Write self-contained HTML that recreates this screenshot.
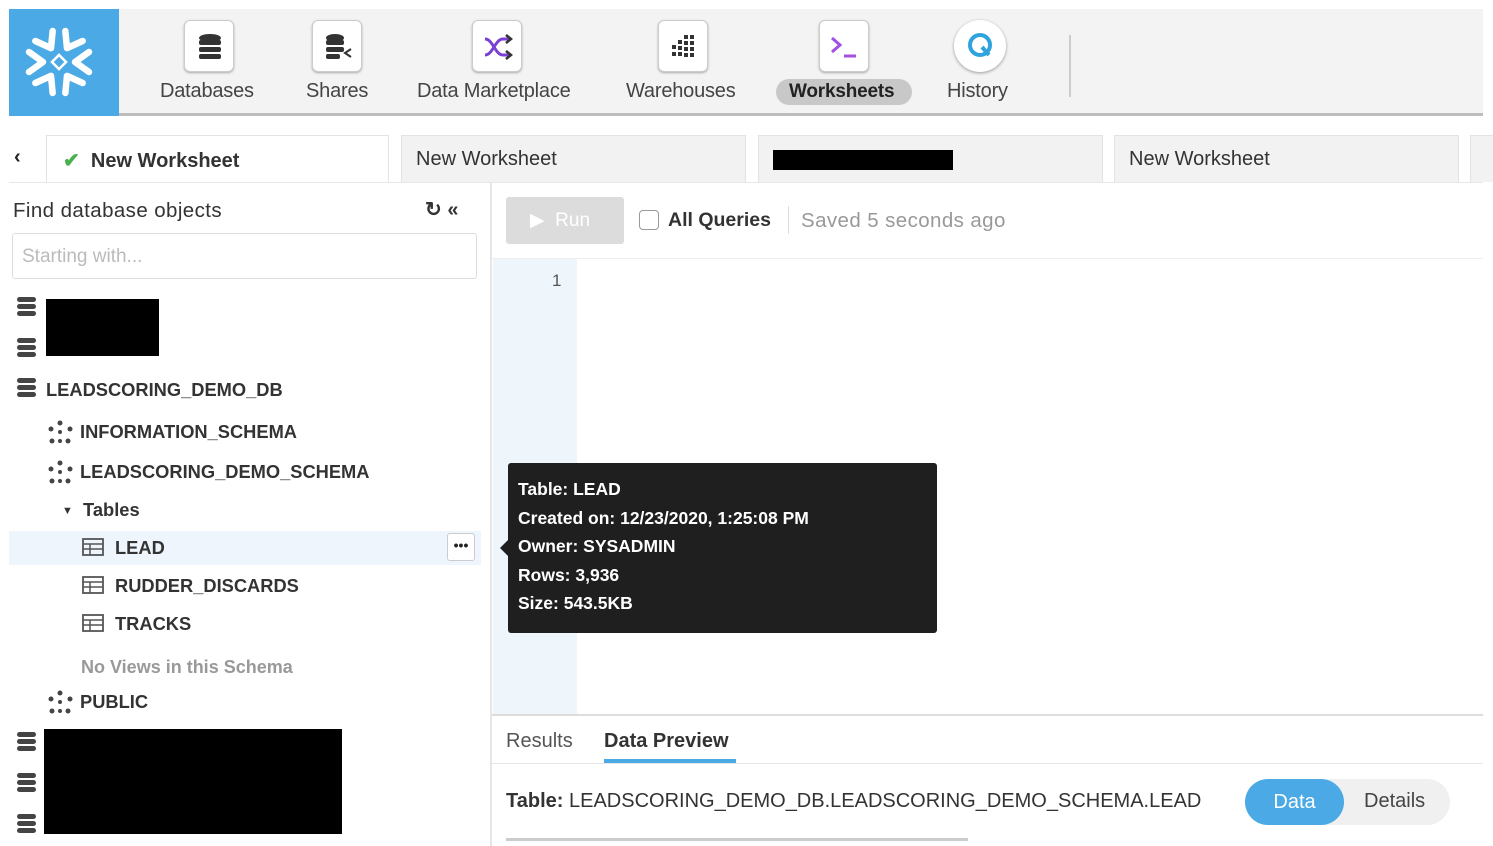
<!DOCTYPE html>
<html><head><meta charset="utf-8"><style>
*{margin:0;padding:0;box-sizing:border-box}
body{width:1493px;height:846px;background:#fff;position:relative;overflow:hidden;font-family:"Liberation Sans",sans-serif;color:#222}
.a{position:absolute;white-space:nowrap}
.nav{top:9px;left:9px;width:1474px;height:107px;background:#f3f3f3;border-bottom:3px solid #bdbdbd}
.logo{top:9px;left:9px;width:110px;height:107px;background:#4ba9e5}
.ib{width:50px;height:52px;background:#fff;border:1px solid #ccc;border-radius:6px;box-shadow:0 1px 2px #aaa}
.nl{font-size:20px;color:#444;top:80px;letter-spacing:-0.2px}
.tab{top:135px;height:47px;background:#f2f2f2;border:1px solid #e3e3e3;border-bottom:none;font-size:20px;color:#333;padding:12px 14px}
.tree{font-size:18.3px;font-weight:bold;color:#333}
.tip{top:463px;left:508px;width:429px;height:170px;background:#1f1f1f;border-radius:3px;color:#fff;font-size:17.5px;font-weight:bold;padding:12px 10px;line-height:28.5px}
</style></head><body>
<div class="a nav"></div>
<div class="a logo"><svg width="110" height="107" viewBox="0 0 110 107"><g stroke="#fff" stroke-width="6.5" stroke-linecap="round" stroke-linejoin="round" fill="none" transform="translate(50 53)">
<g id="c"><path d="M30 -10L16 0L30 10"/></g>
<use href="#c" transform="rotate(60)"/><use href="#c" transform="rotate(120)"/><use href="#c" transform="rotate(180)"/><use href="#c" transform="rotate(240)"/><use href="#c" transform="rotate(300)"/>
</g><rect x="45" y="48" width="10" height="10" transform="rotate(45 50 53)" fill="none" stroke="#fff" stroke-width="2.5"/></svg></div>
<div class="a ib" style="left:184px;top:20px"><svg width="50" height="52"><g fill="#333"><ellipse cx="25" cy="17" rx="11" ry="4"/><rect x="14" y="19" width="22" height="5" rx="2"/><rect x="14" y="26" width="22" height="5" rx="2"/><rect x="14" y="33" width="22" height="5" rx="2"/></g></svg></div>
<div class="a nl" style="left:160px">Databases</div>
<div class="a ib" style="left:312px;top:20px"><svg width="50" height="52"><g fill="#333"><ellipse cx="22" cy="17" rx="9" ry="4"/><rect x="13" y="19" width="18" height="5" rx="2"/><rect x="13" y="26" width="18" height="5" rx="2"/><rect x="13" y="33" width="14" height="5" rx="2"/></g><path d="M38 28l-6 4 6 4" stroke="#333" stroke-width="2" fill="none"/></svg></div>
<div class="a nl" style="left:306px">Shares</div>
<div class="a ib" style="left:472px;top:20px"><svg width="50" height="52"><path d="M12 18c8 0 10 16 18 16h6M12 34c8 0 10-16 18-16h6" stroke="#7b3fd6" stroke-width="3" fill="none"/><path d="M33 14l5 4-5 4M33 30l5 4-5 4" stroke="#333" stroke-width="2.5" fill="none"/></svg></div>
<div class="a nl" style="left:417px">Data Marketplace</div>
<div class="a ib" style="left:658px;top:20px"><svg width="50" height="52"><g fill="#333"><rect x="13" y="24" width="4" height="4"/><rect x="19" y="19" width="4" height="4"/><rect x="19" y="25" width="4" height="4"/><rect x="19" y="31" width="4" height="4"/><rect x="25" y="14" width="4" height="4"/><rect x="25" y="20" width="4" height="4"/><rect x="25" y="26" width="4" height="4"/><rect x="25" y="32" width="4" height="4"/><rect x="31" y="14" width="4" height="4"/><rect x="31" y="20" width="4" height="4"/><rect x="31" y="26" width="4" height="4"/><rect x="31" y="32" width="4" height="4"/><rect x="13" y="31" width="4" height="4"/></g></svg></div>
<div class="a nl" style="left:626px">Warehouses</div>
<div class="a ib" style="left:819px;top:20px"><svg width="50" height="52"><path d="M12 17l8 7-8 7" stroke="#a34fe0" stroke-width="3" fill="none"/><path d="M24 35h12" stroke="#a34fe0" stroke-width="3"/></svg></div>
<div class="a" style="left:776px;top:79px;width:136px;height:26px;background:#c8c8c8;border-radius:13px"></div>
<div class="a nl" style="left:789px;font-weight:bold;color:#222;font-size:19px;top:81px">Worksheets</div>
<div class="a" style="left:954px;top:20px;width:52px;height:52px;border-radius:50%;background:#fff;box-shadow:0 1px 3px #999"><svg width="52" height="52"><circle cx="26" cy="25" r="10" stroke="#2fa4dc" stroke-width="4" fill="none"/><path d="M28 27l7 8" stroke="#2fa4dc" stroke-width="4"/></svg></div>
<div class="a nl" style="left:947px">History</div>
<div class="a" style="left:1069px;top:35px;width:2px;height:62px;background:#ccc"></div>

<div class="a" style="left:14px;top:146px;font-size:20px;font-weight:bold">‹</div>
<div class="a tab" style="left:46px;width:343px;background:#fff;font-weight:bold;padding-left:16px"><span style="color:#4caf50">✔</span>&nbsp; New Worksheet</div>
<div class="a tab" style="left:401px;width:345px">New Worksheet</div>
<div class="a tab" style="left:758px;width:345px"><div style="width:180px;height:20px;background:#000;margin-top:2px"></div></div>
<div class="a tab" style="left:1114px;width:345px">New Worksheet</div>
<div class="a tab" style="left:1470px;width:13px"></div>
<div class="a" style="left:9px;top:182px;width:1474px;height:1px;background:#e8e8e8"></div>

<div class="a" style="left:490px;top:182px;width:2px;height:664px;background:#e6e6e6"></div>
<div class="a" style="left:13px;top:199px;font-size:20.5px;color:#333;letter-spacing:0.4px">Find database objects</div>
<div class="a" style="left:425px;top:197px;font-size:20px;font-weight:bold;color:#333">↻ «</div>
<div class="a" style="left:12px;top:233px;width:465px;height:46px;border:1px solid #ddd;border-radius:3px;font-size:19px;color:#bbb;padding:12px 9px">Starting with...</div>

<svg class="a" style="left:16px;top:297px" width="22" height="65"><g fill="#444"><rect x="1" y="0" width="19" height="5" rx="2.5"/><rect x="1" y="7" width="19" height="5" rx="2.5"/><rect x="1" y="14" width="19" height="5" rx="2.5"/><rect x="1" y="41" width="19" height="5" rx="2.5"/><rect x="1" y="48" width="19" height="5" rx="2.5"/><rect x="1" y="55" width="19" height="5" rx="2.5"/></g></svg>
<div class="a" style="left:46px;top:299px;width:113px;height:57px;background:#000"></div>
<svg class="a" style="left:16px;top:378px" width="22" height="22"><g fill="#444"><rect x="1" y="0" width="19" height="5" rx="2.5"/><rect x="1" y="7" width="19" height="5" rx="2.5"/><rect x="1" y="14" width="19" height="5" rx="2.5"/></g></svg>
<div class="a tree" style="left:46px;top:379px">LEADSCORING_DEMO_DB</div>
<svg class="a" style="left:48px;top:420px" width="26" height="26"><g fill="#444"><circle cx="12" cy="3" r="2.5"/><circle cx="3" cy="9" r="2.5"/><circle cx="22" cy="9" r="2.5"/><circle cx="12" cy="12" r="2"/><circle cx="4" cy="21" r="2.5"/><circle cx="20" cy="21" r="2.5"/><circle cx="12" cy="21" r="2"/></g></svg>
<div class="a tree" style="left:80px;top:421px">INFORMATION_SCHEMA</div>
<svg class="a" style="left:48px;top:460px" width="26" height="26"><g fill="#444"><circle cx="12" cy="3" r="2.5"/><circle cx="3" cy="9" r="2.5"/><circle cx="22" cy="9" r="2.5"/><circle cx="12" cy="12" r="2"/><circle cx="4" cy="21" r="2.5"/><circle cx="20" cy="21" r="2.5"/><circle cx="12" cy="21" r="2"/></g></svg>
<div class="a tree" style="left:80px;top:461px">LEADSCORING_DEMO_SCHEMA</div>
<div class="a tree" style="left:62px;top:499px"><span style="font-size:11px;vertical-align:2px">▼</span>&nbsp; Tables</div>
<div class="a" style="left:9px;top:531px;width:472px;height:34px;background:#eef5fc"></div>
<div class="a" style="left:447px;top:533px;width:28px;height:28px;background:#fff;border:1px solid #ccc;border-radius:3px;font-size:14px;font-weight:bold;text-align:center;line-height:22px">•••</div>
<svg class="a" style="left:82px;top:538px" width="22" height="18"><rect x="1" y="1" width="20" height="16" fill="none" stroke="#555" stroke-width="1.8"/><path d="M1 6h20M1 11h20M8 6v11" stroke="#555" stroke-width="1.5"/></svg>
<div class="a tree" style="left:115px;top:537px">LEAD</div>
<svg class="a" style="left:82px;top:576px" width="22" height="18"><rect x="1" y="1" width="20" height="16" fill="none" stroke="#555" stroke-width="1.8"/><path d="M1 6h20M1 11h20M8 6v11" stroke="#555" stroke-width="1.5"/></svg>
<div class="a tree" style="left:115px;top:575px">RUDDER_DISCARDS</div>
<svg class="a" style="left:82px;top:614px" width="22" height="18"><rect x="1" y="1" width="20" height="16" fill="none" stroke="#555" stroke-width="1.8"/><path d="M1 6h20M1 11h20M8 6v11" stroke="#555" stroke-width="1.5"/></svg>
<div class="a tree" style="left:115px;top:613px">TRACKS</div>
<div class="a" style="left:81px;top:657px;font-size:18px;color:#999;font-weight:bold">No Views in this Schema</div>
<svg class="a" style="left:48px;top:690px" width="26" height="26"><g fill="#444"><circle cx="12" cy="3" r="2.5"/><circle cx="3" cy="9" r="2.5"/><circle cx="22" cy="9" r="2.5"/><circle cx="12" cy="12" r="2"/><circle cx="4" cy="21" r="2.5"/><circle cx="20" cy="21" r="2.5"/><circle cx="12" cy="21" r="2"/></g></svg>
<div class="a tree" style="left:80px;top:691px">PUBLIC</div>
<svg class="a" style="left:16px;top:732px" width="22" height="106"><g fill="#444"><rect x="1" y="0" width="19" height="5" rx="2.5"/><rect x="1" y="7" width="19" height="5" rx="2.5"/><rect x="1" y="14" width="19" height="5" rx="2.5"/><rect x="1" y="41" width="19" height="5" rx="2.5"/><rect x="1" y="48" width="19" height="5" rx="2.5"/><rect x="1" y="55" width="19" height="5" rx="2.5"/><rect x="1" y="82" width="19" height="5" rx="2.5"/><rect x="1" y="89" width="19" height="5" rx="2.5"/><rect x="1" y="96" width="19" height="5" rx="2.5"/></g></svg>
<div class="a" style="left:44px;top:729px;width:298px;height:105px;background:#000"></div>

<div class="a" style="left:506px;top:197px;width:118px;height:47px;background:#dcdcdc;border-radius:3px;color:#fff;font-size:19px;padding:12px 0 0 24px">▶&nbsp; Run</div>
<div class="a" style="left:639px;top:210px;width:20px;height:20px;border:1.5px solid #999;border-radius:4px"></div>
<div class="a" style="left:668px;top:209px;font-size:19.5px;font-weight:bold;color:#333">All Queries</div>
<div class="a" style="left:788px;top:206px;width:1px;height:28px;background:#ddd"></div>
<div class="a" style="left:801px;top:209px;font-size:20.5px;color:#999;letter-spacing:0.4px">Saved 5 seconds ago</div>
<div class="a" style="left:492px;top:258px;width:991px;height:1px;background:#eee"></div>
<div class="a" style="left:493px;top:259px;width:84px;height:455px;background:#eef6fc"></div>
<div class="a" style="left:552px;top:271px;font-size:17px;color:#555">1</div>
<div class="a" style="left:492px;top:714px;width:991px;height:2px;background:#ddd"></div>
<div class="a" style="left:506px;top:730px;font-size:20px;color:#555">Results</div>
<div class="a" style="left:604px;top:730px;font-size:20px;font-weight:bold;color:#333">Data Preview</div>
<div class="a" style="left:604px;top:759px;width:132px;height:4px;background:#4ba9e5"></div>
<div class="a" style="left:492px;top:763px;width:991px;height:1px;background:#e6e6e6"></div>
<div class="a" style="left:506px;top:790px;font-size:20px;color:#333"><b>Table:</b> LEADSCORING_DEMO_DB.LEADSCORING_DEMO_SCHEMA.LEAD</div>
<div class="a" style="left:1245px;top:779px;width:205px;height:46px;background:#f0f0f0;border-radius:23px"></div>
<div class="a" style="left:1245px;top:779px;width:99px;height:46px;background:#4ba9e5;border-radius:23px;color:#fff;font-size:20px;text-align:center;line-height:46px">Data</div>
<div class="a" style="left:1364px;top:790px;font-size:20px;color:#444">Details</div>
<div class="a" style="left:506px;top:838px;width:462px;height:3px;background:#ccc"></div>

<div class="a" style="left:500px;top:540px;width:0;height:0;border-top:8px solid transparent;border-bottom:8px solid transparent;border-right:8px solid #1f1f1f"></div>
<div class="a tip">Table: LEAD<br>Created on: 12/23/2020, 1:25:08 PM<br>Owner: SYSADMIN<br>Rows: 3,936<br>Size: 543.5KB</div>
</body></html>
